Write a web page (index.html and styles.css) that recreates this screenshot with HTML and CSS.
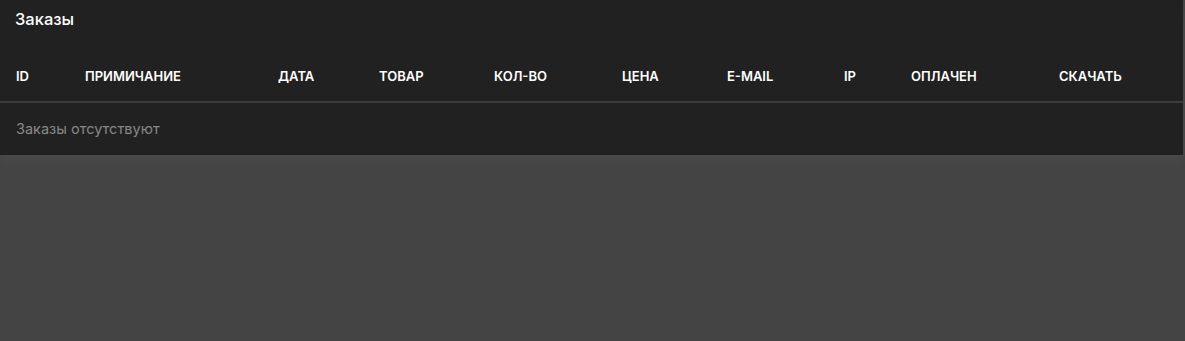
FILE: index.html
```html
<!DOCTYPE html>
<html lang="ru">
<head>
    <meta charset="UTF-8">
    <meta name="viewport" content="width=device-width, initial-scale=1.0">
    <title>Заказы</title>
    <link rel="stylesheet" href="styles.css">
</head>
<body>

    <!-- Orders card -->
    <div class="card">
        <h2 class="card-title">Заказы</h2>

        <table class="orders">
            <colgroup>
                <col style="width: 69px">
                <col style="width: 193px">
                <col style="width: 101px">
                <col style="width: 115px">
                <col style="width: 128px">
                <col style="width: 105px">
                <col style="width: 117px">
                <col style="width: 67px">
                <col style="width: 148px">
                <col>
            </colgroup>
            <thead>
                <tr>
                    <th>ID</th>
                    <th>Примичание</th>
                    <th>Дата</th>
                    <th>Товар</th>
                    <th>Кол-во</th>
                    <th>Цена</th>
                    <th>E-mail</th>
                    <th>IP</th>
                    <th>Оплачен</th>
                    <th>Скачать</th>
                </tr>
            </thead>
            <tbody>
                <tr>
                    <td class="empty" colspan="10">Заказы отсутствуют</td>
                </tr>
            </tbody>
        </table>
    </div>

</body>
</html>
```

FILE: styles.css
```css
body {
    font-family: 'Inter', 'Noto Sans', sans-serif;
    margin: 0;
    padding: 0;
    background: #444444;
    min-height: 100vh;
}
/* Card */
.card {
    width: calc(100% - 2px);
    background: #212121;
    box-shadow: 0 4px 14px rgba(255, 255, 255, 0.05);
}
.card-title {
    margin: 0;
    padding: 8px 15px 20px;
    font-size: 16.5px;
    line-height: 22px;
    font-weight: 500;
    color: #ffffff;
}
/* Orders table */
.orders {
    width: 100%;
    border-collapse: collapse;
    table-layout: fixed;
}
.orders th {
    text-align: left;
    padding: 16px 0 15px 16px;
    font-size: 13px;
    line-height: 20px;
    font-weight: 600;
    text-transform: uppercase;
    color: #ffffff;
    border-bottom: 2px solid #3c3c3c;
}
.orders td {
    padding: 16px;
    font-size: 14.5px;
    line-height: 20px;
}
.orders .empty {
    color: #888888;
}
```
